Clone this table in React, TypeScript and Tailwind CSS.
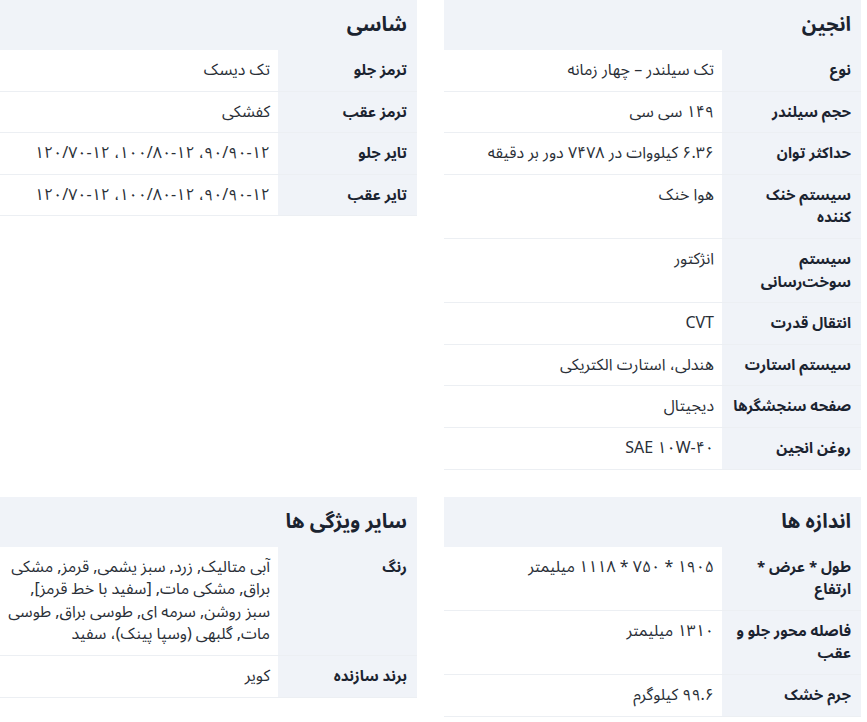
import React from "react";

type Row = { label: string; value: string };

const sections: { title: string; rows: Row[] }[] = [
  {
    title: "انجین",
    rows: [
      { label: "نوع", value: "تک سیلندر – چهار زمانه" },
      { label: "حجم سیلندر", value: "۱۴۹ سی سی" },
      { label: "حداکثر توان", value: "۶.۳۶ کیلووات در ۷۴۷۸ دور بر دقیقه" },
      { label: "سیستم خنک کننده", value: "هوا خنک" },
      { label: "سیستم سوخت‌رسانی", value: "انژکتور" },
      { label: "انتقال قدرت", value: "CVT" },
      { label: "سیستم استارت", value: "هندلی، استارت الکتریکی" },
      { label: "صفحه سنجشگرها", value: "دیجیتال" },
      { label: "روغن انجین", value: "SAE ۱۰W-۴۰" },
    ],
  },
  {
    title: "شاسی",
    rows: [
      { label: "ترمز جلو", value: "تک دیسک" },
      { label: "ترمز عقب", value: "کفشکی" },
      { label: "تایر جلو", value: "۹۰/۹۰-۱۲، ۱۰۰/۸۰-۱۲، ۱۲۰/۷۰-۱۲" },
      { label: "تایر عقب", value: "۹۰/۹۰-۱۲، ۱۰۰/۸۰-۱۲، ۱۲۰/۷۰-۱۲" },
    ],
  },
  {
    title: "اندازه ها",
    rows: [
      { label: "طول * عرض * ارتفاع", value: "۱۹۰۵ * ۷۵۰ * ۱۱۱۸ میلیمتر" },
      { label: "فاصله محور جلو و عقب", value: "۱۳۱۰ میلیمتر" },
      { label: "جرم خشک", value: "۹۹.۶ کیلوگرم" },
    ],
  },
  {
    title: "سایر ویژگی ها",
    rows: [
      {
        label: "رنگ",
        value:
          "آبی متالیک, زرد, سبز یشمی, قرمز, مشکی براق, مشکی مات, [سفید با خط قرمز], سبز روشن, سرمه ای, طوسی براق, طوسی مات, گلبهی (وسپا پینک)، سفید",
      },
      { label: "برند سازنده", value: "کویر" },
    ],
  },
];

const SpecTable = ({ title, rows }: { title: string; rows: Row[] }) => {
  return (
    <div className="flex flex-col">
      <div className="h-[50px] flex items-center px-[10px] bg-[#f0f3f8] text-[20px] font-bold text-[#1b2330]">
        {title}
      </div>
      {rows.map((row) => (
        <div key={row.label} className="flex border-b border-[#eceff3] leading-[22.6px]">
          <div className="w-1/3 shrink-0 bg-[#f0f3f8] px-[10px] py-[9px] text-[15px] font-bold text-[#1b2330]">
            {row.label}
          </div>
          <div className="flex-1 bg-white px-[8px] py-[9px] text-[16px] text-[#2a2f37]">{row.value}</div>
        </div>
      ))}
    </div>
  );
};

export default function App() {
  return (
    <div
      dir="rtl"
      className="min-h-screen bg-white pr-[6px] grid grid-cols-2 gap-[27px] content-start"
      style={{ fontFamily: '"Noto Sans Arabic", "DejaVu Sans", "Noto Sans", sans-serif' }}
    >
      {sections.map((s) => (
        <SpecTable key={s.title} title={s.title} rows={s.rows} />
      ))}
    </div>
  );
}
